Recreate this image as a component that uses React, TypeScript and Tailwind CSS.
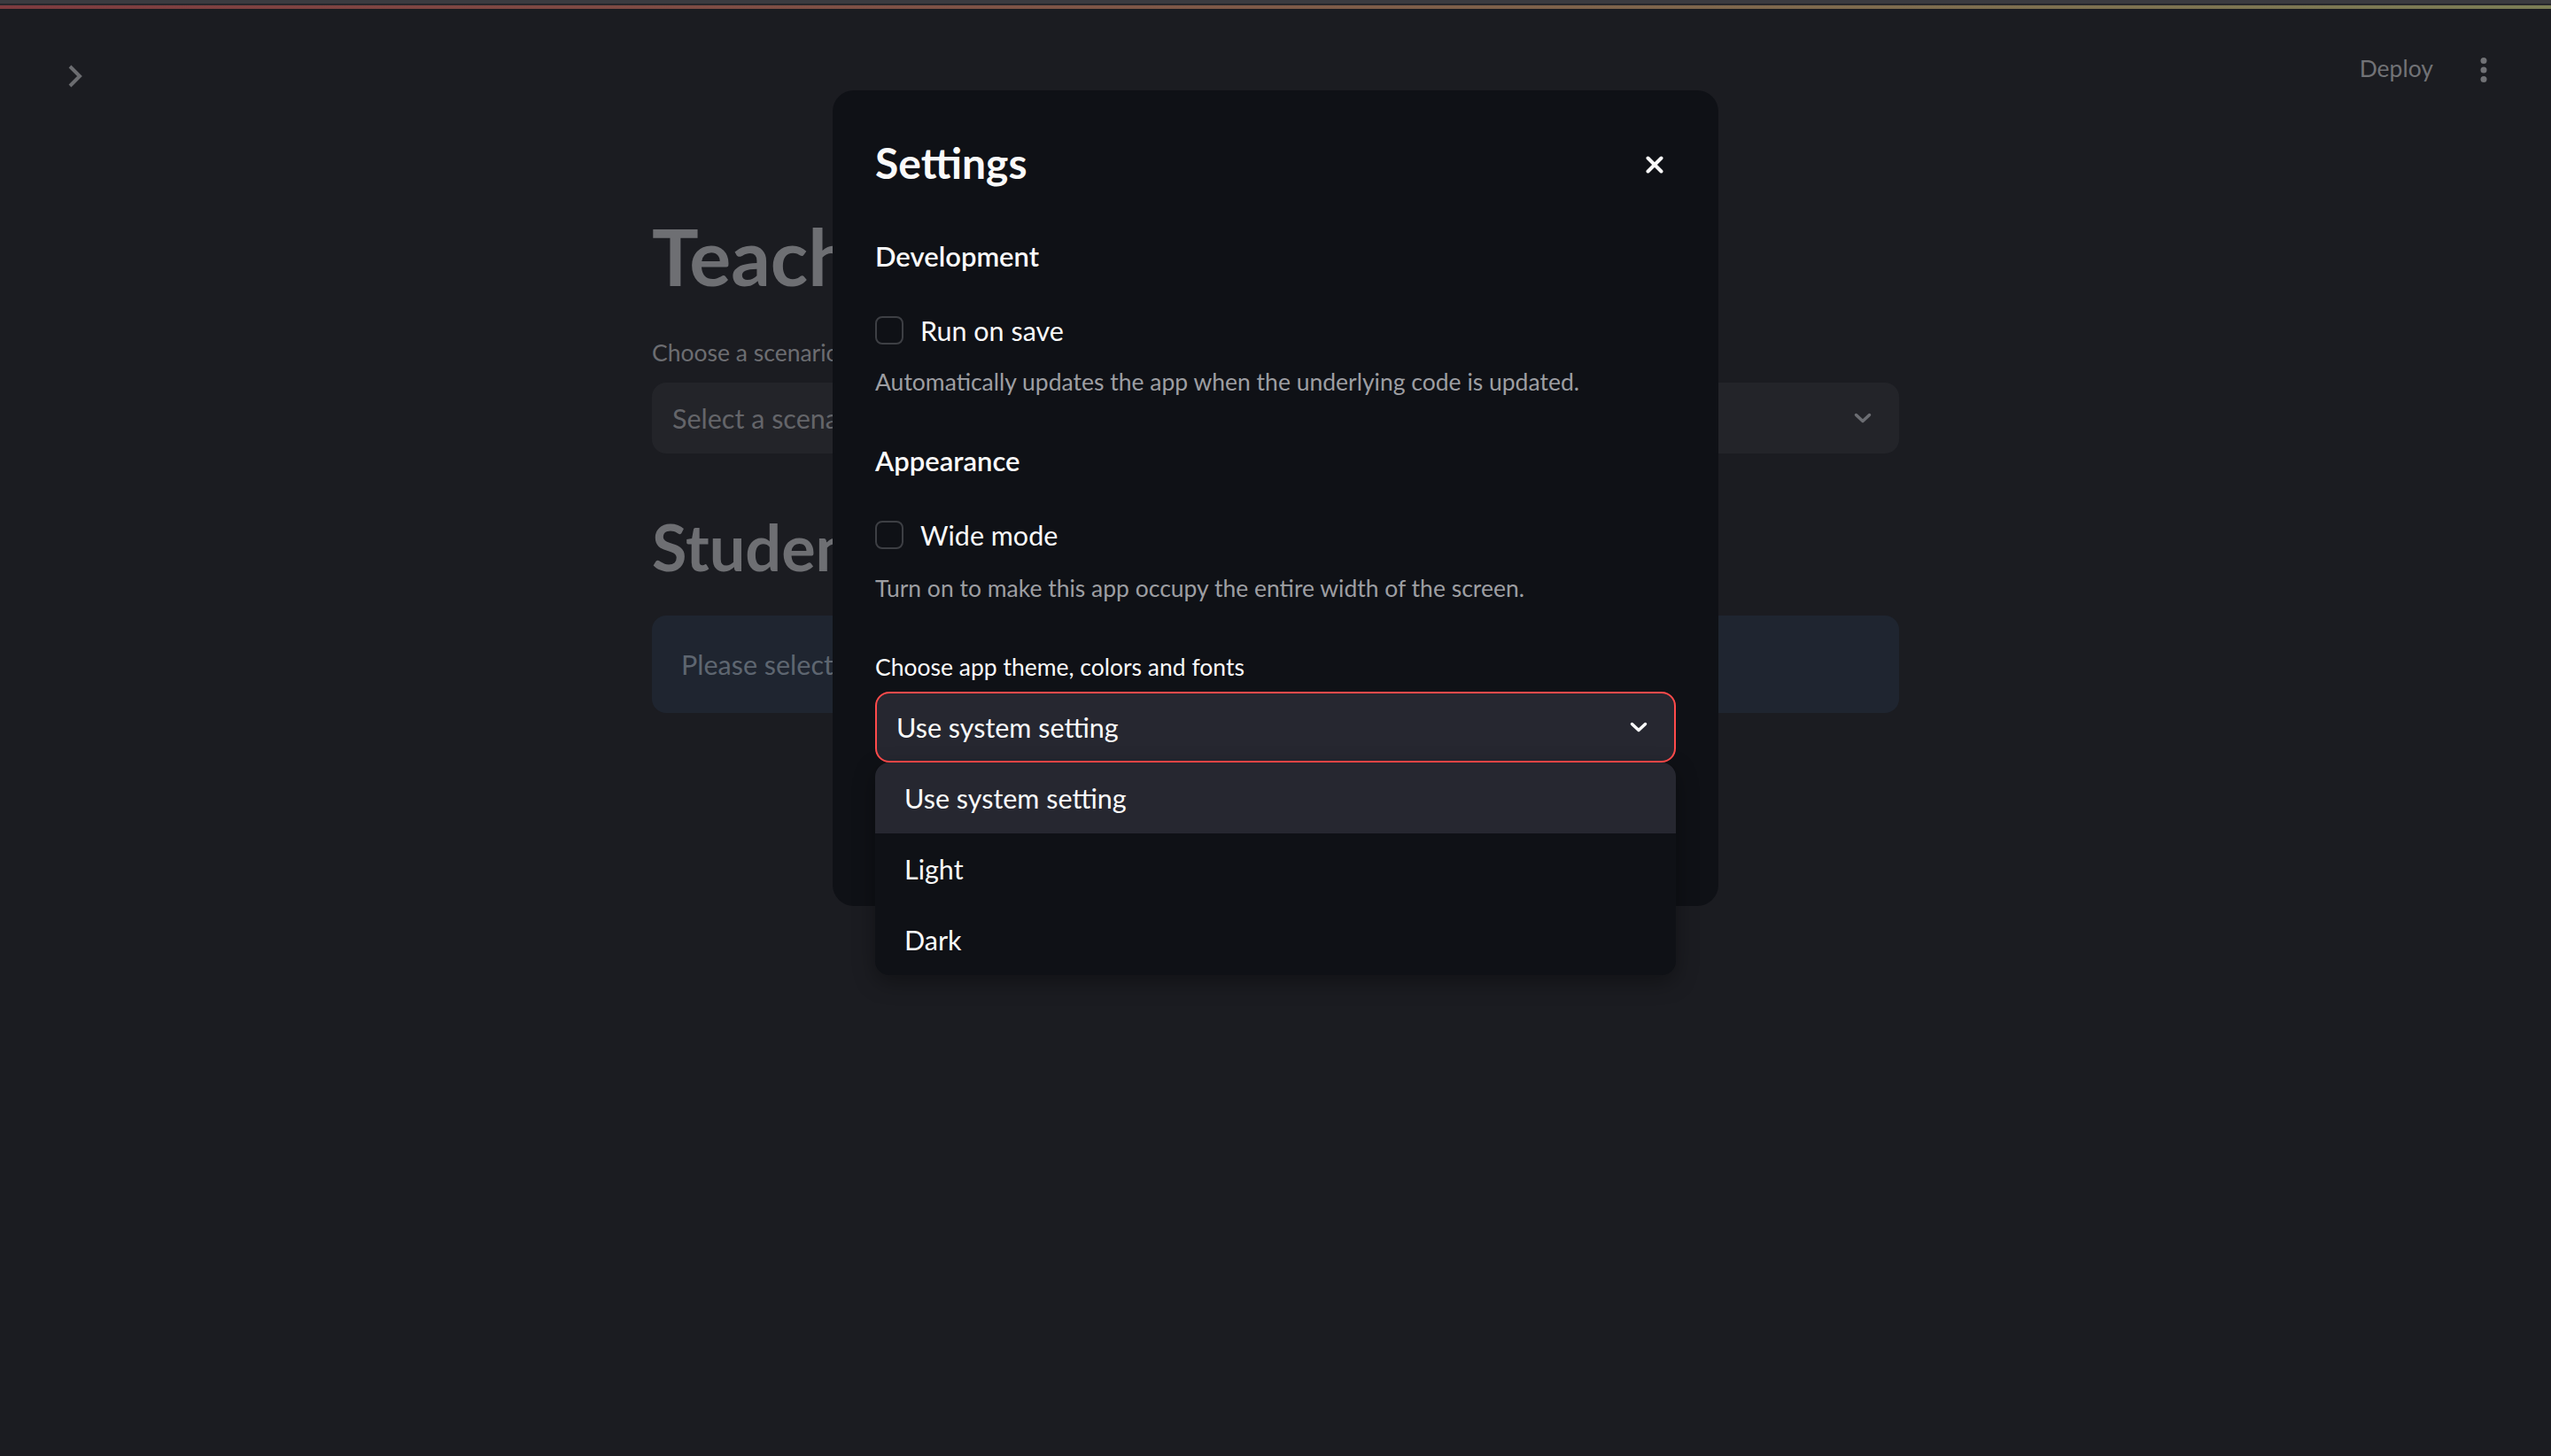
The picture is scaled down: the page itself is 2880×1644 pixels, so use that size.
import React from "react";

const ChevronDown = ({ className }: { className?: string }) => (
  <svg width="20" height="12" viewBox="0 0 20 12" fill="none" className={className}>
    <path d="M2.5 2.5L10 9.5L17.5 2.5" stroke="currentColor" strokeWidth="3.5" strokeLinecap="round" strokeLinejoin="round" />
  </svg>
);

const Checkbox = ({ label }: { label: string }) => (
  <label className="flex h-[40px] items-center gap-[19px]">
    <span className="h-[32px] w-[32px] rounded-[8px] border-2 border-[#3d3f44]" />
    <span className="text-[30.5px] leading-[40px] text-[#fafafa]">{label}</span>
  </label>
);

export default function App() {
  const options = ["Use system setting", "Light", "Dark"];

  return (
    <div className="relative min-h-[1644px] w-full overflow-hidden bg-[#1b1c21] font-['Lato',sans-serif]">
      {/* top decoration */}
      <div className="h-[4px] bg-[#3b3b40]" />
      <div className="h-[2px] bg-[#26262b]" />
      <div className="h-[4px] bg-gradient-to-r from-[#7d3b3f] via-[#7e5a48] to-[#7b7d55]" />

      {/* header */}
      <div className="flex h-[110px] items-start justify-between">
        <div className="pl-[76px] pt-[63px] text-[#6b6c70]">
          <svg width="18" height="26" viewBox="0 0 18 26" fill="none">
            <path d="M3 2L14 13L3 24" stroke="currentColor" strokeWidth="4" strokeLinejoin="miter" />
          </svg>
        </div>
        <div className="flex items-start gap-[53px] pr-[72px]">
          <span className="pt-[49px] text-[26.5px] leading-[36px] text-[#717276]">Deploy</span>
          <svg width="8" height="28" viewBox="0 0 8 28" className="mt-[55px] text-[#717276]">
            <circle cx="4" cy="3.5" r="3.5" fill="currentColor" />
            <circle cx="4" cy="14" r="3.5" fill="currentColor" />
            <circle cx="4" cy="24.5" r="3.5" fill="currentColor" />
          </svg>
        </div>
      </div>

      {/* page content, dimmed behind the dialog */}
      <main className="mx-auto w-[1408px] pt-[117px]">
        <h1 className="whitespace-nowrap text-[88px] font-bold leading-[104px] text-[#6e6f73]">
          Teacher Training Simulator
        </h1>
        <p className="mt-[39px] text-[26.5px] leading-[36px] text-[#6c6d71]">Choose a scenario:</p>
        <div className="mt-[16px] flex h-[80px] items-center justify-between rounded-[16px] bg-[#232429] pl-[23px] pr-[31px]">
          <span className="text-[30.5px] leading-[40px] text-[#646569]">Select a scenario...</span>
          <ChevronDown className="text-[#6b6d72]" />
        </div>
        <h2 className="mt-[61px] text-[72px] font-bold leading-[88px] text-[#6e6f73]">Student View</h2>
        <div className="mt-[34px] rounded-[16px] bg-[#1f2530] px-[33px] py-[35px]">
          <p className="text-[30.5px] leading-[40px] text-[#5e6670]">Please select a scenario to begin.</p>
        </div>
      </main>

      {/* settings dialog */}
      <div className="absolute left-[940px] top-[102px] h-[921px] w-[1000px] rounded-[24px] bg-[#0f1116] px-[48px] pt-[52px]">
        <div className="flex items-start justify-between">
          <h2 className="text-[48px] font-bold leading-[60px] text-[#fafafa]">Settings</h2>
          <button className="mr-[14px] mt-[22px] text-[#fafafa]">
            <svg width="20" height="20" viewBox="0 0 20 20" fill="none">
              <path d="M2.5 2.5L17.5 17.5M17.5 2.5L2.5 17.5" stroke="currentColor" strokeWidth="4" strokeLinecap="round" />
            </svg>
          </button>
        </div>

        <h3 className="mt-[55px] text-[31px] font-semibold leading-[40px] text-[#fafafa]">Development</h3>
        <div className="mt-[44px]">
          <Checkbox label="Run on save" />
        </div>
        <p className="mt-[20px] text-[26.5px] leading-[36px] text-[#9d9ea2]">
          Automatically updates the app when the underlying code is updated.
        </p>

        <h3 className="mt-[51px] text-[31px] font-semibold leading-[40px] text-[#fafafa]">Appearance</h3>
        <div className="mt-[44px]">
          <Checkbox label="Wide mode" />
        </div>
        <p className="mt-[22px] text-[26.5px] leading-[36px] text-[#9d9ea2]">
          Turn on to make this app occupy the entire width of the screen.
        </p>

        <p className="mt-[53px] text-[26.5px] leading-[36px] text-[#fafafa]">Choose app theme, colors and fonts</p>
        <div className="relative mt-[10px]">
          <div className="flex h-[80px] items-center justify-between rounded-[16px] border-2 border-[#ff4b4b] bg-[#262730] pl-[22px] pr-[30px]">
            <span className="text-[30.5px] leading-[40px] text-[#fafafa]">Use system setting</span>
            <ChevronDown className="text-[#fafafa]" />
          </div>

          {/* open listbox */}
          <ul className="absolute left-0 right-0 top-[80px] z-10 overflow-hidden rounded-[16px] bg-[#0f1116] shadow-[0_8px_24px_rgba(0,0,0,0.35)]">
            {options.map((o, i) => (
              <li
                key={o}
                className={
                  i === 0
                    ? "flex h-[80px] items-center bg-[#262730] px-[33px] text-[30.5px] leading-[40px] text-[#fafafa]"
                    : "flex h-[80px] items-center px-[33px] text-[30.5px] leading-[40px] text-[#fafafa]"
                }
              >
                {o}
              </li>
            ))}
          </ul>
        </div>
      </div>
    </div>
  );
}
